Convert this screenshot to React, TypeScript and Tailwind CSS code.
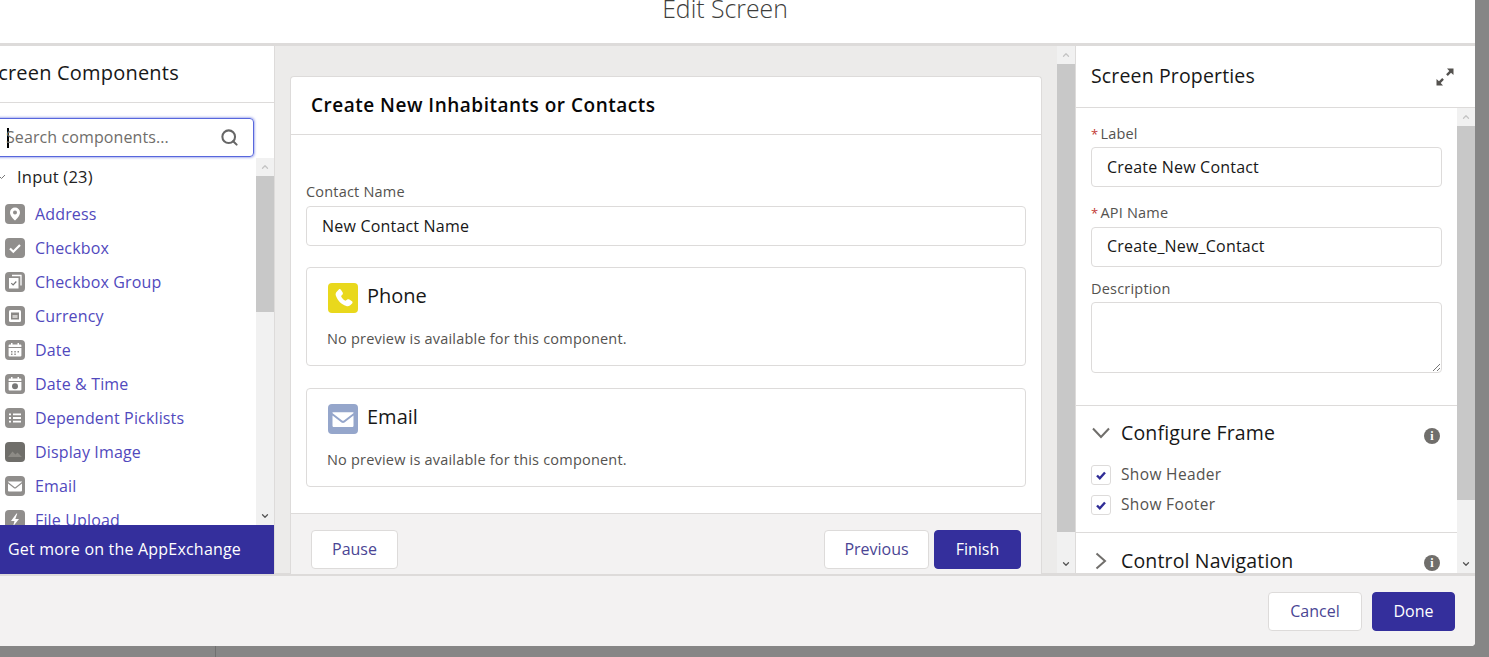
import { ReactNode } from "react";
import { ChevronDown, ChevronUp, Search } from "lucide-react";

const font = "font-['Open_Sans',sans-serif]";

function Scrollbar({ thumb }: { thumb: string }) {
  return (
    <div className="flex w-[18px] shrink-0 flex-col bg-[#f1f1f1]">
      <div className="flex h-[18px] items-center justify-center">
        <ChevronUp size={10} strokeWidth={3} className="text-[#c4c4c4]" />
      </div>
      <div className={`bg-[#c8c8c8] ${thumb}`} />
      <div className="flex-1" />
      <div className="flex h-[18px] items-center justify-center">
        <ChevronDown size={10} strokeWidth={3} className="text-[#555]" />
      </div>
    </div>
  );
}

function Glyph({ bg = "bg-[#908e8c]", children }: { bg?: string; children: ReactNode }) {
  return (
    <span className={`flex h-5 w-5 shrink-0 items-center justify-center rounded ${bg}`}>
      <svg viewBox="0 0 20 20" className="h-5 w-5">
        {children}
      </svg>
    </span>
  );
}

const mail = (
  <>
    <path d="M3.500 5.500h13c.5 0 .7.300.4.600L10.600 11c-.3.300-.9.300-1.200 0L3.100 6.100c-.3-.3-.1-.6.400-.6z" fill="#fff" />
    <path d="M3 7.600l6 4.700c.6.400 1.400.400 2 0l6-4.700v6.900c0 .5-.4.900-.9.900H3.900c-.5 0-.9-.4-.9-.9z" fill="#fff" />
  </>
);

const components: { name: string; icon: ReactNode; bg?: string }[] = [
  {
    name: "Address",
    icon: <path d="M10 3.500a5 5 0 0 0-5 5c0 3.300 3.600 6.800 4.600 7.800.2.200.6.200.8 0 1-1 4.600-4.500 4.600-7.800a5 5 0 0 0-5-5zm0 7a2 2 0 1 1 0-4 2 2 0 0 1 0 4z" fill="#fff" />,
  },
  {
    name: "Checkbox",
    icon: <path d="M5 10.500l3.300 3.200L15 7" fill="none" stroke="#fff" strokeWidth="2.200" />,
  },
  {
    name: "Checkbox Group",
    icon: (
      <>
        <path d="M7 3.500h9v10" fill="none" stroke="#fff" strokeWidth="1.300" />
        <rect x="4" y="6" width="9.500" height="10.500" fill="#fff" />
        <path d="M6.300 11.200l1.800 1.800 3.200-3.500" fill="none" stroke="#777" strokeWidth="1.200" />
      </>
    ),
  },
  {
    name: "Currency",
    icon: (
      <>
        <rect x="4" y="4" width="12" height="12" rx="1.500" fill="#fff" />
        <rect x="6" y="6.500" width="8" height="7" fill="#8a8886" />
        <rect x="7.500" y="9" width="5" height="3" fill="#cfcdcb" />
      </>
    ),
  },
  {
    name: "Date",
    icon: (
      <>
        <path d="M6 3h1.500v1.500h5V3H14v1.500h1.500c.5 0 .9.400.9.900V7H3.600V5.400c0-.5.400-.9.900-.9H6z" fill="#fff" />
        <path d="M3.600 8h12.800v7.600c0 .5-.4.900-.9.900h-11c-.5 0-.9-.4-.9-.9z" fill="#fff" />
        <path d="M6 11h1.500v1.500H6zM9.300 11h1.500v1.500H9.300zM12.500 11H14v1.500h-1.500zM6 13.500h1.500V15H6zM9.300 13.500h1.500V15H9.300z" fill="#908e8c" />
      </>
    ),
  },
  {
    name: "Date & Time",
    icon: (
      <>
        <path d="M6 3h1.500v1.500h5V3H14v1.500h1.500c.5 0 .9.400.9.900V7H3.600V5.400c0-.5.400-.9.900-.9H6z" fill="#fff" />
        <path d="M3.600 8h12.800v7.600c0 .5-.4.900-.9.900h-11c-.5 0-.9-.4-.9-.9z" fill="#fff" />
        <circle cx="10" cy="12.200" r="3" fill="#777" />
      </>
    ),
  },
  {
    name: "Dependent Picklists",
    icon: <path d="M4 5.500h2v1.800H4zM8 5.500h8v1.800H8zM4 9.100h2v1.800H4zM8 9.100h8v1.800H8zM4 12.700h2v1.800H4zM8 12.700h8v1.800H8z" fill="#fff" />,
  },
  {
    name: "Display Image",
    bg: "bg-[#6f6e6a]",
    icon: <path d="M3 15l4.500-5.500 3 3 2-2 4.500 4.500z" fill="#8d8b86" />,
  },
  { name: "Email", icon: mail },
  {
    name: "File Upload",
    icon: <path d="M11.500 3.500L6 11h3.500l-1.500 5.500 6-7.500h-3.700l2-5.500z" fill="#fff" />,
  },
];

function TextField({ value, className = "" }: { value: string; className?: string }) {
  return (
    <div className={`flex h-10 items-center rounded border border-[#dddbda] bg-white pl-[15px] text-[16px] tracking-[0.2px] text-[#181818] ${className}`}>
      {value}
    </div>
  );
}

function PreviewCard({ title, bg, icon }: { title: string; bg: string; icon: ReactNode }) {
  return (
    <div className="h-[99px] rounded border border-[#dddbda] px-[21px] pt-[15px]">
      <div className="flex items-start gap-[9px]">
        <span className={`flex h-[30px] w-[30px] items-center justify-center rounded ${bg}`}>
          <svg viewBox="0 0 20 20" className="h-[30px] w-[30px]">
            {icon}
          </svg>
        </span>
        <span className="-mt-[2px] text-[20px] leading-[30px] text-[#181818]">{title}</span>
      </div>
      <p className="-ml-px mt-[16px] text-[14.500px] leading-5 tracking-[0.2px] text-[#54524f]">
        No preview is available for this component.
      </p>
    </div>
  );
}

function Btn({ children, primary, className = "" }: { children: ReactNode; primary?: boolean; className?: string }) {
  return (
    <button
      className={`flex items-center justify-center rounded border pb-[2px] text-[16px] ${
        primary ? "border-[#342f9c] bg-[#342f9c] font-medium text-white" : "border-[#dddbda] bg-white text-[#4a4594]"
      } ${className}`}
    >
      {children}
    </button>
  );
}

function Info() {
  return (
    <span className="flex h-4 w-4 items-center justify-center rounded-full bg-[#706e6b] font-['Liberation_Serif',serif] text-[12px] font-bold leading-none text-white">
      i
    </span>
  );
}

function Check({ label }: { label: string }) {
  return (
    <div className="flex h-[30px] items-center gap-[10px]">
      <span className="flex h-5 w-5 items-center justify-center rounded-[3px] border border-[#dddbda] bg-white">
        <svg viewBox="0 0 12 12" className="h-3 w-3">
          <path d="M2 6.500l2.800 2.800L10 3.500" fill="none" stroke="#2f2c96" strokeWidth="2.400" />
        </svg>
      </span>
      <span className="text-[15.500px] tracking-[0.35px] text-[#54524f]">{label}</span>
    </div>
  );
}

const labelText = "text-[14.500px] leading-5 tracking-[0.2px] text-[#54524f]";
const sectionText = "flex-1 whitespace-nowrap text-[19.500px] tracking-[0.15px] text-[#181818]";

export default function App() {
  return (
    <div className={`h-[657px] w-[1489px] overflow-hidden bg-[#868686] ${font}`}>
      <div className="flex h-[646px] w-[1475px] flex-col overflow-hidden rounded-br bg-white">
        {/* title, clipped by the top of the window */}
        <div className="flex h-[43px] shrink-0 items-start justify-center overflow-hidden pr-[25px]">
          <h1 className="-mt-[7px] text-[24.800px] font-light leading-[30px] text-[#3e3e3c]">Edit Screen</h1>
        </div>

        <div className="flex h-[533px] shrink-0 border-y-[3px] border-[#dddbda]">
          {/* components panel */}
          <aside className="-mb-px flex w-[275px] shrink-0 flex-col overflow-hidden border-r border-[#dddbda] bg-white">
            <div className="flex h-[57px] shrink-0 items-center border-b border-[#dddbda]">
              <h2 className="-mt-[2px] -ml-[13px] whitespace-nowrap text-[20px] tracking-[0.2px] text-[#181818]">Screen Components</h2>
            </div>
            <div className="h-[55px] shrink-0 pt-[15px]">
              <div className="-ml-[12px] flex h-[39px] w-[266px] items-center rounded border border-[#5867dd] pl-[18px] pr-[14px] text-[16px] tracking-[0.1px] text-[#706e6b] shadow-[0_0_3px_#5867dd]">
                <span className="h-[20px] w-[2px] shrink-0 bg-black" />
                <span className="-mt-[2px] -ml-[3px] flex-1">Search components...</span>
                <Search size={19} strokeWidth={2.600} className="text-[#666]" />
              </div>
            </div>
            <div className="flex min-h-0 flex-1">
              <div className="min-w-0 flex-1 overflow-hidden">
                <div className="flex h-[38px] items-center text-[16.500px] tracking-[0.2px] text-[#222]">
                  <svg viewBox="0 0 6 6" className="mr-[11px] h-[6px] w-[6px] shrink-0">
                    <path d="M0 3l1.500 1.500L5 1" fill="none" stroke="#777" strokeWidth="1" />
                  </svg>
                  Input (23)
                </div>
                <ul className="flex flex-col pl-[5px] pt-[1px]">
                  {components.map((c) => (
                    <li key={c.name} className="flex h-[34px] shrink-0 items-center gap-[10px] text-[16px] tracking-[0.15px] text-[#5149bd]">
                      <Glyph bg={c.bg}>{c.icon}</Glyph>
                      {c.name}
                    </li>
                  ))}
                </ul>
              </div>
              <Scrollbar thumb="h-[136px]" />
            </div>
            <div className="flex h-[49px] shrink-0 items-center bg-[#342f9c] pb-[2px] pl-2 text-[16px] font-medium tracking-[0.2px] text-white">
              Get more on the AppExchange
            </div>
          </aside>

          {/* canvas */}
          <main className="flex min-w-0 flex-1 bg-[#ecebea]">
            <div className="min-w-0 flex-1 px-[15px] pt-[30px]">
              <div className="flex h-[498px] flex-col overflow-hidden rounded-t border border-b-0 border-[#dddbda] bg-white">
                <div className="flex h-[58px] shrink-0 items-center border-b border-[#dddbda] pl-5 text-[19px] font-semibold tracking-[0.5px] text-[#080707]">
                  <span>Create New Inhabitants or Contacts</span>
                </div>
                <div className="flex-1 px-[15px] pt-[47px]">
                  <div className={labelText}>Contact Name</div>
                  <TextField value="New Contact Name" className="mt-[4px]" />
                  <div className="mt-[21px]">
                    <PreviewCard
                      title="Phone"
                      bg="bg-[#e9d81c]"
                      icon={
                        <path
                          d="M7.200 4.300c.4-.4 1-.4 1.300.1l1.300 2c.2.400.2.900-.1 1.200l-1 1c.5 1.300 1.500 2.500 3 3.300l1.100-.9c.3-.3.800-.3 1.200-.1l2 1.300c.5.300.5 1 .1 1.400l-1.300 1.200c-.7.700-1.700.900-2.600.600-3.600-1.300-5.800-3.600-7-7-.3-.9 0-1.900.6-2.600z"
                          fill="#fff"
                        />
                      }
                    />
                  </div>
                  <div className="mt-[22px]">
                    <PreviewCard title="Email" bg="bg-[#95a6cb]" icon={mail} />
                  </div>
                </div>
                <div className="flex h-[61px] shrink-0 items-start justify-between border-t border-[#dddbda] bg-[#f3f2f2] pl-5 pr-5 pt-4">
                  <Btn className="h-[39px] w-[87px]">Pause</Btn>
                  <div className="flex gap-[5px]">
                    <Btn className="h-[39px] w-[105px]">Previous</Btn>
                    <Btn primary className="h-[39px] w-[87px]">
                      Finish
                    </Btn>
                  </div>
                </div>
              </div>
            </div>
            <Scrollbar thumb="h-[468px]" />
          </main>

          {/* properties panel */}
          <aside className="flex w-[400px] shrink-0 flex-col border-l border-[#dddbda] bg-white">
            <div className="flex h-[62px] shrink-0 items-center justify-between border-b border-[#dddbda] pl-[15px] pr-[20px]">
              <h2 className="-mt-[2px] text-[19.500px] tracking-[0.15px] text-[#181818]">Screen Properties</h2>
              <svg viewBox="0 0 20 20" className="h-5 w-5">
                <path d="M12 1.500h6.500V8L16 5.700l-3.200 3.200-1.700-1.700L14.300 4z" fill="#54524f" />
                <path d="M8 18.500H1.500V12L4 14.300l3.200-3.200 1.700 1.700L5.700 16z" fill="#54524f" />
              </svg>
            </div>
            <div className="flex min-h-0 flex-1">
              <div className="min-w-0 flex-1 overflow-hidden">
                <div className="h-[298px] border-b border-[#dddbda] px-[15px] pt-[16px]">
                  <div className={labelText}>
                    <span className="mr-[2px] text-[13px] text-[#c23934]">*</span>Label
                  </div>
                  <TextField value="Create New Contact" className="mt-[3px]" />
                  <div className={`mt-[16px] ${labelText}`}>
                    <span className="mr-[2px] text-[13px] text-[#c23934]">*</span>API Name
                  </div>
                  <TextField value="Create_New_Contact" className="mt-[4px] pb-[2px]" />
                  <div className={`mt-[12px] ${labelText}`}>Description</div>
                  <div className="relative mt-[3px] h-[71px] rounded border border-[#dddbda]">
                    <svg viewBox="0 0 10 10" className="absolute bottom-0 right-0 h-[10px] w-[10px]">
                      <path d="M2 9l7-7M6 9l3-3" stroke="#777" strokeWidth="1" />
                    </svg>
                  </div>
                </div>
                <div className="h-[127px] border-b border-[#dddbda] pl-[15px] pr-[17px] pt-[13px]">
                  <div className="flex h-7 items-center">
                    <svg viewBox="0 0 20 12" className="mr-[10px] h-3 w-5 shrink-0">
                      <path d="M2 1.500l8 8.500 8-8.500" fill="none" stroke="#706e6b" strokeWidth="2" />
                    </svg>
                    <span className={sectionText}>Configure Frame</span>
                    <span className="mt-[5px]">
                      <Info />
                    </span>
                  </div>
                  <div className="mt-[13px]">
                    <Check label="Show Header" />
                    <Check label="Show Footer" />
                  </div>
                </div>
                <div className="flex h-10 items-center pl-[15px] pr-[17px] pt-[15px]">
                  <svg viewBox="0 0 20 18" className="mr-[10px] h-[18px] w-5 shrink-0">
                    <path d="M5.500 1.500L14 9l-8.500 7.500" fill="none" stroke="#706e6b" strokeWidth="2" />
                  </svg>
                  <span className={sectionText}>Control Navigation</span>
                  <span className="mt-[5px]">
                    <Info />
                  </span>
                </div>
              </div>
              <Scrollbar thumb="h-[374px]" />
            </div>
          </aside>
        </div>

        <div className="flex flex-1 items-start justify-end gap-[10px] bg-[#f3f2f2] pr-5 pt-4">
          <Btn className="h-[39px] w-[94px]">Cancel</Btn>
          <Btn primary className="h-[39px] w-[83px]">
            Done
          </Btn>
        </div>
      </div>
      <div className="ml-[215px] h-[11px] border-l border-[#707070]" />
    </div>
  );
}
